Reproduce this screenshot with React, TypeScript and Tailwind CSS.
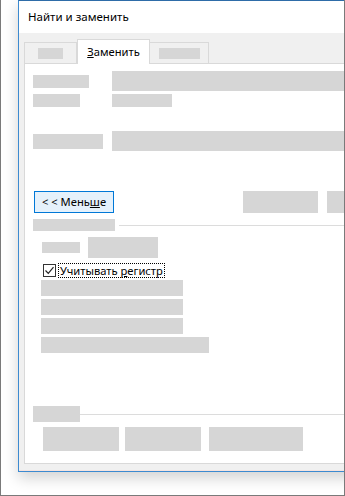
const font = { fontFamily: '"Noto Sans", "Liberation Sans", sans-serif' };

function Block({ className }: { className: string }) {
    return <div className={`bg-[#d6d6d6] shrink-0 ${className}`} />;
}

function App() {
    return (
        <div className="w-[345px] h-[496px] overflow-hidden bg-white border-l border-r border-b border-[#7a7a7a] relative" style={font}>
            {/* окно диалога */}
            <div className="ml-[17px] w-[360px] h-[472px] border border-t-[#2e6ca8] border-[#3c8ad0] bg-[#f0f0f0] shadow-[0_6px_14px_rgba(0,0,0,0.18)] flex flex-col">
                <div className="h-[32px] bg-white flex items-center pl-[9px] text-[11.5px] text-black shrink-0">
                    Найти и заменить
                </div>

                <div className="flex-1 flex flex-col pl-[5px] pb-[6px] border-b border-[#f5e4e0]">
                    {/* вкладки */}
                    <div className="h-[30px] flex items-end shrink-0">
                        <div className="w-[53px] h-[21px] shrink-0 border border-b-0 border-[#d9d9d9] bg-[#f0f0f0] flex items-center justify-center">
                            <Block className="w-[25px] h-[11px] mt-[1px]" />
                        </div>
                        <div className="w-[73px] h-[25px] shrink-0 border border-b-0 border-[#d9d9d9] bg-white flex items-center justify-center text-[11.2px] text-black relative top-[1px] z-10">
                            <span><span className="underline">З</span>аменить</span>
                        </div>
                        <div className="w-[59px] h-[21px] shrink-0 border border-b-0 border-l-0 border-[#d9d9d9] bg-[#f0f0f0] flex items-center justify-center">
                            <Block className="w-[41px] h-[11px] mt-[1px]" />
                        </div>
                    </div>

                    {/* панель */}
                    <div className="flex-1 bg-white border border-[#d9d9d9] flex flex-col pl-[8px]">
                        <div className="mt-[7px] h-[20px] flex items-center">
                            <div className="w-[79px] shrink-0"><Block className="w-[56px] h-[13px]" /></div>
                            <Block className="flex-1 h-[20px]" />
                        </div>
                        <div className="mt-[3px] h-[13px] flex items-center">
                            <div className="w-[79px] shrink-0"><Block className="w-[47px] h-[13px]" /></div>
                            <Block className="w-[60px] h-[13px]" />
                        </div>
                        <div className="mt-[24px] h-[20px] flex items-center">
                            <div className="w-[79px] shrink-0"><Block className="w-[70px] h-[15px]" /></div>
                            <Block className="flex-1 h-[20px]" />
                        </div>

                        <div className="mt-[40px] h-[22px] flex items-center">
                            <button className="ml-[1px] w-[80px] h-[22px] shrink-0 bg-[#e5f1fb] border border-[#0078d7] text-[11.2px] text-black flex items-center justify-center leading-none">
                                <span>&lt; &lt; Мень<span className="underline">ш</span>е</span>
                            </button>
                            <Block className="ml-[129px] w-[75px] h-[22px]" />
                            <Block className="ml-[9px] w-[75px] h-[22px]" />
                        </div>

                        <div className="mt-[6px] h-[12px] flex items-center">
                            <Block className="w-[82px] h-[12px]" />
                            <div className="ml-[4px] flex-1 h-px bg-[#dcdcdc]" />
                        </div>

                        <div className="mt-[6px] h-[21px] flex items-center">
                            <Block className="ml-[9px] w-[38px] h-[11px]" />
                            <Block className="ml-[8px] w-[70px] h-[21px]" />
                        </div>

                        <div className="mt-[5px] h-[15px] flex items-center">
                            <div className="ml-[10px] w-[13px] h-[13px] shrink-0 border border-[#333] bg-white flex items-center justify-center">
                                <svg width="11" height="11" viewBox="0 0 11 11">
                                    <path d="M1.5 5.5 L4.3 8.3 L9.5 2.2" fill="none" stroke="#222" strokeWidth="1.2" />
                                </svg>
                            </div>
                            <div className="ml-[2px] px-[1px] h-[15px] border border-dotted border-black text-[11.2px] text-black flex items-center leading-none">
                                <span>Учитывать <span className="underline">р</span>егистр</span>
                            </div>
                        </div>

                        <div className="mt-[2px] ml-[8px] flex flex-col gap-[3px]">
                            <Block className="w-[142px] h-[16px]" />
                            <Block className="w-[142px] h-[16px]" />
                            <Block className="w-[142px] h-[16px]" />
                            <Block className="w-[168px] h-[16px]" />
                        </div>

                        <div className="mt-[53px] h-[16px] flex items-center">
                            <Block className="w-[47px] h-[16px]" />
                            <div className="flex-1 h-px bg-[#dcdcdc]" />
                        </div>

                        <div className="mt-[5px] h-[24px] flex items-center">
                            <Block className="ml-[10px] w-[76px] h-[24px]" />
                            <Block className="ml-[6px] w-[76px] h-[24px]" />
                            <Block className="ml-[8px] w-[94px] h-[24px]" />
                        </div>
                    </div>
                </div>
            </div>
        </div>
    );
}

export default App;
